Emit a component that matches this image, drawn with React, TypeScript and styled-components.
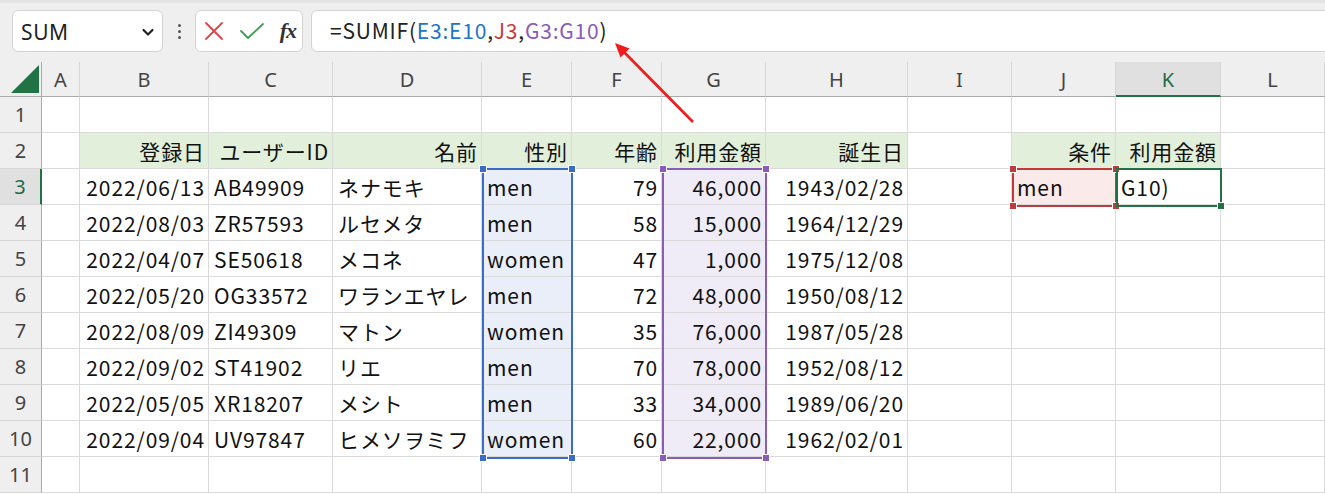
import styled, { createGlobalStyle } from 'styled-components';

const GlobalStyle = createGlobalStyle`
  html, body {
    margin: 0;
    padding: 0;
    background: #ffffff;
    overflow: hidden;
  }
  body {
    font-family: "Noto Sans CJK JP", "Noto Sans", sans-serif;
  }
`;

const GRID_COLS = '42px 38px 129px 124px 149px 90px 90px 104px 142px 104px 104px 105px 104px';
const GRID_ROWS = '35px repeat(11, 36px)';

const Page = styled.div`
  position: relative;
  width: 1325px;
  height: 494px;
  overflow: hidden;
  background: #fff;
`;

const Toolbar = styled.div`
  height: 62px;
  box-sizing: border-box;
  padding: 7px 0 10px 12px;
  display: flex;
  align-items: stretch;
  background: #efefef;
  border-top: 3px solid #e4e4e4;
`;

const NameBox = styled.div`
  width: 151px;
  box-sizing: border-box;
  background: #fff;
  border: 1px solid #d3d3d3;
  border-radius: 6px;
  display: flex;
  align-items: center;
  justify-content: space-between;
  padding: 2px 6px 0 8px;
  font-family: "Noto Sans", sans-serif;
  font-size: 21px;
  letter-spacing: 0.6px;
  color: #222;
`;

const Grip = styled.div`
  width: 32px;
  display: flex;
  flex-direction: column;
  align-items: center;
  justify-content: center;
  gap: 3px;

  span {
    width: 3px;
    height: 3px;
    border-radius: 50%;
    background: #555;
  }
`;

const ButtonBox = styled.div`
  width: 108px;
  box-sizing: border-box;
  background: #fff;
  border: 1px solid #d3d3d3;
  border-radius: 6px;
  display: flex;
  align-items: center;
  justify-content: space-between;
  padding: 0 6px 0 8px;
  margin-right: 8px;
`;

const Fx = styled.span`
  font-family: "Liberation Serif", serif;
  font-style: italic;
  font-weight: 700;
  font-size: 22px;
  color: #333;
  letter-spacing: -1px;
`;

const FormulaBox = styled.div`
  flex: 1;
  margin-right: -10px;
  background: #fff;
  border: 1px solid #d3d3d3;
  border-radius: 6px;
  display: flex;
  align-items: center;
  padding: 0 0 2px 18px;
  font-size: 21px;
  letter-spacing: 0.8px;
  color: #222;
  white-space: pre;
`;

const Ref = styled.span<{ $c: string }>`
  color: ${(p) => p.$c};
`;

const SheetStack = styled.div`
  display: grid;
`;

const Sheet = styled.div`
  grid-area: 1 / 1;
  display: grid;
  grid-template-columns: ${GRID_COLS};
  grid-template-rows: ${GRID_ROWS};
`;

const Overlay = styled.div`
  grid-area: 1 / 1;
  display: grid;
  grid-template-columns: ${GRID_COLS};
  grid-template-rows: ${GRID_ROWS};
  pointer-events: none;
`;

const Corner = styled.div`
  background: #efefef;
  border-right: 1px solid #ababab;
  border-bottom: 1px solid #ababab;
  display: flex;
  align-items: flex-end;
  justify-content: flex-end;
  padding: 0 2px 3px 0;
`;

const ColHead = styled.div<{ $active?: boolean }>`
  box-sizing: border-box;
  background: ${(p) => (p.$active ? '#e0e0e0' : '#efefef')};
  border-right: 1px solid #d6d6d6;
  border-bottom: ${(p) => (p.$active ? '2px solid #217346' : '1px solid #ababab')};
  display: flex;
  align-items: center;
  justify-content: center;
  font-family: "Noto Sans", sans-serif;
  font-size: 20px;
  color: ${(p) => (p.$active ? '#1d6b45' : '#444')};
  padding-top: ${(p) => (p.$active ? '1px' : '0')};
`;

const RowHead = styled.div<{ $active?: boolean }>`
  box-sizing: border-box;
  background: ${(p) => (p.$active ? '#e0e0e0' : '#efefef')};
  border-right: ${(p) => (p.$active ? '2px solid #217346' : '1px solid #ababab')};
  border-bottom: 1px solid #d6d6d6;
  display: flex;
  align-items: center;
  justify-content: center;
  font-family: "Noto Sans", sans-serif;
  font-size: 20px;
  color: ${(p) => (p.$active ? '#1d6b45' : '#444')};
`;

const Cell = styled.div<{ $align: 'left' | 'right'; $bg?: string }>`
  box-sizing: border-box;
  background: ${(p) => p.$bg ?? '#fff'};
  border-right: 1px solid #dadada;
  border-bottom: 1px solid #dadada;
  display: flex;
  align-items: center;
  justify-content: ${(p) => (p.$align === 'right' ? 'flex-end' : 'flex-start')};
  padding: 1px 3px 0 5px;
  font-size: 21px;
  letter-spacing: 0.9px;
  color: #111;
  white-space: nowrap;
`;

const Range = styled.div<{ $c: string; $col: string; $row: string }>`
  grid-column: ${(p) => p.$col};
  grid-row: ${(p) => p.$row};
  position: relative;
  border: 2px solid ${(p) => p.$c};
  margin: -1px -1px -2px 0;
`;

const Handle = styled.span<{ $c: string; $pos: 'tl' | 'tr' | 'bl' | 'br' }>`
  position: absolute;
  width: 6px;
  height: 6px;
  background: ${(p) => p.$c};
  border: 1px solid #fff;
  top: ${(p) => (p.$pos[0] === 't' ? '-5px' : 'auto')};
  bottom: ${(p) => (p.$pos[0] === 'b' ? '-5px' : 'auto')};
  left: ${(p) => (p.$pos[1] === 'l' ? '-5px' : 'auto')};
  right: ${(p) => (p.$pos[1] === 'r' ? '-5px' : 'auto')};
`;

const Arrow = styled.svg`
  position: absolute;
  left: 0;
  top: 0;
  pointer-events: none;
`;

const LETTERS = ['A', 'B', 'C', 'D', 'E', 'F', 'G', 'H', 'I', 'J', 'K', 'L'];

const DATA = [
  ['2022/06/13', 'AB49909', 'ネナモキ', 'men', '79', '46,000', '1943/02/28'],
  ['2022/08/03', 'ZR57593', 'ルセメタ', 'men', '58', '15,000', '1964/12/29'],
  ['2022/04/07', 'SE50618', 'メコネ', 'women', '47', '1,000', '1975/12/08'],
  ['2022/05/20', 'OG33572', 'ワランエヤレ', 'men', '72', '48,000', '1950/08/12'],
  ['2022/08/09', 'ZI49309', 'マトン', 'women', '35', '76,000', '1987/05/28'],
  ['2022/09/02', 'ST41902', 'リエ', 'men', '70', '78,000', '1952/08/12'],
  ['2022/05/05', 'XR18207', 'メシト', 'men', '33', '34,000', '1989/06/20'],
  ['2022/09/04', 'UV97847', 'ヒメソヲミフ', 'women', '60', '22,000', '1962/02/01'],
];

const HEADERS: Record<number, string> = {
  1: '登録日', 2: 'ユーザーID', 3: '名前', 4: '性別', 5: '年齢', 6: '利用金額', 7: '誕生日',
  9: '条件', 10: '利用金額',
};

const GREEN = '#e2efda';
const BLUE_FILL = '#e9eef8';
const PURPLE_FILL = '#efebf7';
const RED_FILL = '#fbeaea';

type CellInfo = { text: string; align: 'left' | 'right'; bg?: string };

function cellFor(row: number, col: number): CellInfo {
  if (row === 2) {
    const green = (col >= 1 && col <= 7) || col === 9 || col === 10;
    return { text: HEADERS[col] ?? '', align: 'right', bg: green ? GREEN : undefined };
  }
  if (row >= 3 && row <= 10) {
    if (col >= 1 && col <= 7) {
      const text = DATA[row - 3][col - 1];
      const align = [1, 5, 6, 7].includes(col) ? 'right' : 'left';
      const bg = col === 4 ? BLUE_FILL : col === 6 ? PURPLE_FILL : undefined;
      return { text, align, bg };
    }
    if (row === 3 && col === 9) return { text: 'men', align: 'left', bg: RED_FILL };
    if (row === 3 && col === 10) return { text: 'G10)', align: 'left' };
  }
  return { text: '', align: 'left' };
}

export default function App() {
  const rows = Array.from({ length: 11 }, (_, i) => i + 1);

  return (
    <Page>
      <GlobalStyle />
      <Toolbar>
        <NameBox>
          <span>SUM</span>
          <svg width="16" height="16" viewBox="0 0 16 16">
            <path d="M3.5 6 L8 10.5 L12.5 6" fill="none" stroke="#222" strokeWidth="2.2" strokeLinecap="round" strokeLinejoin="round" />
          </svg>
        </NameBox>
        <Grip>
          <span />
          <span />
          <span />
        </Grip>
        <ButtonBox>
          <svg width="20" height="20" viewBox="0 0 20 20">
            <path d="M2 2 L18 18 M18 2 L2 18" stroke="#e04545" strokeWidth="1.8" strokeLinecap="round" />
          </svg>
          <svg width="26" height="20" viewBox="0 0 26 20">
            <path d="M2 10 L9 17 L24 3" fill="none" stroke="#3f9e55" strokeWidth="1.8" strokeLinecap="round" strokeLinejoin="round" />
          </svg>
          <Fx>fx</Fx>
        </ButtonBox>
        <FormulaBox>
          =SUMIF(<Ref $c="#1f73c8">E3:E10</Ref>,<Ref $c="#c8383a">J3</Ref>,<Ref $c="#8a5cb8">G3:G10</Ref>)
        </FormulaBox>
      </Toolbar>

      <SheetStack>
        <Sheet>
          <Corner>
            <svg width="28" height="28" viewBox="0 0 28 28">
              <polygon points="28,0 28,28 0,28" fill="#217346" />
            </svg>
          </Corner>
          {LETTERS.map((l) => (
            <ColHead key={l} $active={l === 'K'}>{l}</ColHead>
          ))}
          {rows.flatMap((r) => [
            <RowHead key={`h${r}`} $active={r === 3}>{r}</RowHead>,
            ...LETTERS.map((l, ci) => {
              const c = cellFor(r, ci);
              return (
                <Cell key={`${l}${r}`} $align={c.align} $bg={c.bg}>
                  {c.text}
                </Cell>
              );
            }),
          ])}
        </Sheet>
        <Overlay>
          <Range $c="#3b6dc6" $col="6" $row="4 / 12">
            <Handle $c="#3b6dc6" $pos="tl" />
            <Handle $c="#3b6dc6" $pos="tr" />
            <Handle $c="#3b6dc6" $pos="bl" />
            <Handle $c="#3b6dc6" $pos="br" />
          </Range>
          <Range $c="#8a5cb8" $col="8" $row="4 / 12">
            <Handle $c="#8a5cb8" $pos="tl" />
            <Handle $c="#8a5cb8" $pos="tr" />
            <Handle $c="#8a5cb8" $pos="bl" />
            <Handle $c="#8a5cb8" $pos="br" />
          </Range>
          <Range $c="#c0393b" $col="11" $row="4">
            <Handle $c="#c0393b" $pos="tl" />
            <Handle $c="#c0393b" $pos="tr" />
            <Handle $c="#c0393b" $pos="bl" />
            <Handle $c="#c0393b" $pos="br" />
          </Range>
          <Range $c="#217346" $col="12" $row="4">
            <Handle $c="#217346" $pos="br" />
          </Range>
        </Overlay>
      </SheetStack>

      <Arrow width="1325" height="494" viewBox="0 0 1325 494">
        <line x1="693" y1="122" x2="623" y2="51" stroke="#f21a1a" strokeWidth="2.6" />
        <polygon points="615,43 629.5,48.5 620.5,57.5" fill="#f21a1a" />
      </Arrow>
    </Page>
  );
}
